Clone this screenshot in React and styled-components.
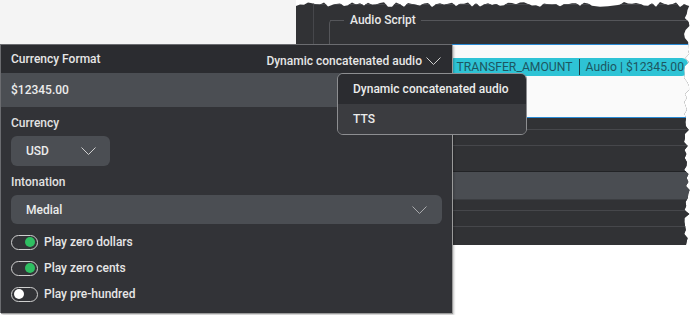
import styled, { createGlobalStyle } from 'styled-components';

const GlobalStyle = createGlobalStyle`
  html, body {
    margin: 0;
    padding: 0;
    background: #ffffff;
  }
  body {
    font-family: Roboto, "Liberation Sans", sans-serif;
  }
`;

// jagged torn-paper outline for the window behind the popup
const tornEdge = (() => {
  let seed = 7;
  const rnd = () => {
    seed = (seed * 9301 + 49297) % 233280;
    return seed / 233280;
  };
  const pts = ['0px 6px'];
  for (let x = 4; x < 390; x += 4) {
    pts.push(`${x}px ${(2 + rnd() * 5).toFixed(1)}px`);
  }
  for (let y = 6; y < 245; y += 4) {
    pts.push(`${(388 + rnd() * 6).toFixed(1)}px ${y}px`);
  }
  pts.push('390px 245px', '0px 245px');
  return `polygon(${pts.join(',')})`;
})();

const Stage = styled.div`
  position: relative;
  width: 698px;
  height: 315px;
  overflow: hidden;
  background: linear-gradient(#f4f4f4, #f4f4f4) no-repeat 0 0 / 296px 44px, #ffffff;
`;

const Window = styled.div.attrs(p => ({ style: { clipPath: p.$clip } }))`
  margin-left: 296px;
  width: 396px;
  height: 245px;
  background: #313235;
  display: flex;
`;

const SideStrip = styled.div`
  width: 17px;
  border-right: 1px solid #46474b;
  flex: none;
`;

const WindowBody = styled.div`
  flex: 1;
  display: flex;
  flex-direction: column;
  padding-top: 4px;
`;

const TopRule = styled.div`
  border-top: 1px solid #46474b;
  height: 15px;
`;

const Fieldset = styled.div`
  margin-left: 15px;
  height: 24px;
  display: flex;
  align-items: flex-start;
  border-left: 1px solid #55565a;
  border-top-left-radius: 4px;
  &::before {
    content: '';
    width: 14px;
    border-top: 1px solid #55565a;
  }
  &::after {
    content: '';
    flex: 1;
    border-top: 1px solid #55565a;
  }
`;

const Legend = styled.span`
  font-size: 12px;
  font-weight: 500;
  color: #e8e8e8;
  line-height: 14px;
  margin-top: -7px;
  padding: 0 5px 0 6px;
`;

const Editor = styled.div`
  height: 74px;
  background: #fafafa;
  border-top: 1px solid #2a8ad4;
  border-bottom: 1px solid #2a8ad4;
  display: flex;
  justify-content: flex-end;
  align-items: flex-start;
  padding: 13px 4px 0 0;
  box-sizing: border-box;
`;

const Chip = styled.div`
  background: #2ec3d5;
  color: #1d5661;
  font-size: 12.2px;
  line-height: 18px;
  height: 18px;
  padding: 0 4px 0 9px;
  border-radius: 6px;
  white-space: nowrap;
  display: flex;
  align-items: center;
`;

const ChipBar = styled.span`
  display: inline-block;
  width: 1px;
  height: 16px;
  background: #1d3f46;
  margin: 0 6px;
`;

const Row = styled.div`
  height: ${p => p.$h}px;
  background: ${p => (p.$band ? '#4a4d52' : '#313235')};
  border-bottom: 1px solid ${p => p.$line || '#46474b'};
  flex: none;
`;

const Popup = styled.div`
  position: absolute;
  left: 0;
  top: 44px;
  width: 452px;
  height: 269px;
  background: #323337;
  border-top: 1px solid #6b6c70;
  border-left: 1px solid #6b6c70;
  box-sizing: border-box;
  box-shadow: 1px 1px 0 #9a9a9a, 2px 2px 2px rgba(0,0,0,0.25);
  display: flex;
  flex-direction: column;
`;

const Header = styled.div`
  height: 28px;
  background: #2b2c30;
  display: flex;
  align-items: center;
  justify-content: space-between;
  padding: 0 11px 0 10px;
  font-size: 12px;
  font-weight: 500;
  color: #e6e6e6;
`;

const FormatPicker = styled.div`
  display: flex;
  align-items: center;
  gap: 4px;
  margin-top: 3px;
`;

const Preview = styled.div`
  height: 34px;
  background: #4b4e53;
  display: flex;
  align-items: center;
  padding: 0 10px;
  font-size: 12px;
  font-weight: 500;
  color: #ececec;
`;

const Body = styled.div`
  padding: 9px 10px 0 10px;
  display: flex;
  flex-direction: column;
`;

const Label = styled.div`
  font-size: 12px;
  font-weight: 500;
  color: #e2e2e2;
  line-height: 14px;
  margin-bottom: 6px;
`;

const Select = styled.div`
  width: ${p => p.$w};
  height: ${p => p.$h}px;
  background: #4b4e53;
  border-radius: 6px;
  display: flex;
  align-items: center;
  justify-content: space-between;
  padding: 0 ${p => p.$pr}px 0 15px;
  box-sizing: border-box;
  font-size: 12px;
  font-weight: 500;
  color: #ececec;
  margin-bottom: ${p => p.$mb}px;
`;

const ToggleRow = styled.div`
  display: flex;
  align-items: center;
  gap: 6px;
  height: 26px;
  font-size: 12px;
  font-weight: 500;
  color: #e6e6e6;
`;

const Track = styled.span`
  width: 27px;
  height: 15px;
  border: 1px solid #cfcfcf;
  border-radius: 9px;
  box-sizing: border-box;
  display: flex;
  align-items: center;
  justify-content: ${p => (p.$on ? 'flex-end' : 'flex-start')};
  padding: 0 2px;
  &::after {
    content: '';
    width: 10px;
    height: 10px;
    border-radius: 50%;
    background: ${p => (p.$on ? '#2fbf62' : '#ffffff')};
  }
`;

const Menu = styled.div`
  position: absolute;
  left: 337px;
  top: 73px;
  width: 190px;
  border: 1px solid #8d8e91;
  border-radius: 6px;
  overflow: hidden;
  box-sizing: border-box;
`;

const MenuItem = styled.div`
  height: 30px;
  display: flex;
  align-items: center;
  padding-left: 15px;
  background: ${p => (p.$active ? '#2b2c30' : '#3b3c40')};
  font-size: 12px;
  font-weight: 500;
  color: #ececec;
`;

const Chevron = ({ color = '#cfcfcf' }) => (
  <svg width="15" height="8" viewBox="0 0 15 8">
    <polyline points="0.5,0.5 7.5,7.5 14.5,0.5" fill="none" stroke={color} strokeWidth="1" />
  </svg>
);

const App = () => {
  return (
    <Stage>
      <GlobalStyle />
      <Window $clip={tornEdge}>
        <SideStrip />
        <WindowBody>
          <TopRule />
          <Fieldset>
            <Legend>Audio Script</Legend>
          </Fieldset>
          <Editor>
            <Chip>
              TRANSFER_AMOUNT<ChipBar />Audio | $12345.00
            </Chip>
          </Editor>
          <Row $h={11} />
          <Row $h={15} />
          <Row $h={25} $line="#222326" />
          <Row $h={27} $band $line="#3c3e42" />
          <Row $h={10} />
          <Row $h={15} />
          <Row $h={17} $line="transparent" />
        </WindowBody>
      </Window>

      <Popup>
        <Header>
          <span>Currency Format</span>
          <FormatPicker>
            <span>Dynamic concatenated audio</span>
            <Chevron />
          </FormatPicker>
        </Header>
        <Preview>$12345.00</Preview>
        <Body>
          <Label>Currency</Label>
          <Select $w="99px" $h={30} $pr={14} $mb={9}>
            <span>USD</span>
            <Chevron />
          </Select>
          <Label>Intonation</Label>
          <Select $w="431px" $h={29} $pr={15} $mb={5}>
            <span>Medial</span>
            <Chevron color="#a9aaad" />
          </Select>
          <ToggleRow><Track $on />Play zero dollars</ToggleRow>
          <ToggleRow><Track $on />Play zero cents</ToggleRow>
          <ToggleRow><Track />Play pre-hundred</ToggleRow>
        </Body>
      </Popup>

      <Menu>
        <MenuItem $active>Dynamic concatenated audio</MenuItem>
        <MenuItem>TTS</MenuItem>
      </Menu>
    </Stage>
  );
};

export default App;
